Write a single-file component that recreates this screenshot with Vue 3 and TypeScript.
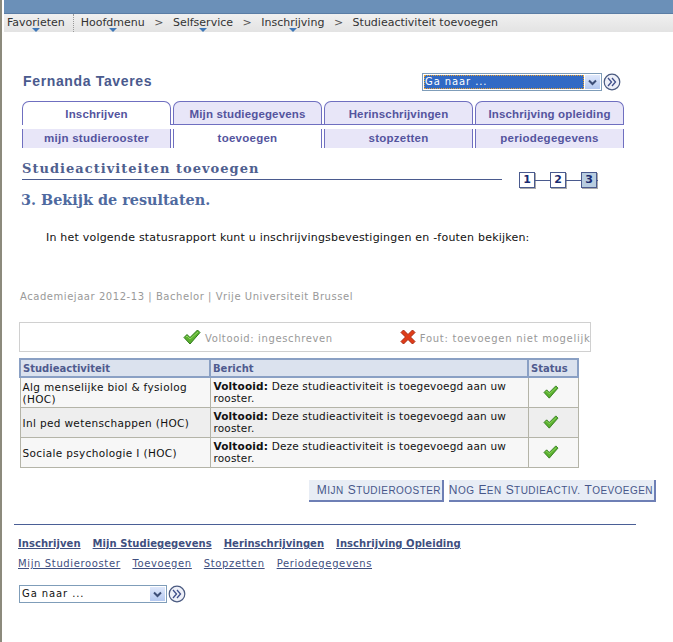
<template>
  <div class="page">
    <div class="topbar"></div>
    <nav class="crumbs">
      <span class="crumb fav">Favorieten<i class="drop"></i></span>
      <span class="crumb main">Hoofdmenu<i class="drop"></i></span>
      <span class="sep">&gt;</span>
      <span class="crumb">Selfservice<i class="drop"></i></span>
      <span class="sep">&gt;</span>
      <span class="crumb">Inschrijving<i class="drop"></i></span>
      <span class="sep">&gt;</span>
      <span class="crumb">Studieactiviteit toevoegen</span>
    </nav>

    <div class="head">
      <div class="name">Fernanda Taveres</div>
      <div class="goto">
        <div class="sel wide"><span class="sel-text active">Ga naar ...</span><span class="sel-btn"><svg width="9" height="7" viewBox="0 0 9 7"><path d="M1 1.5l3.5 3.5L8 1.5" fill="none" stroke="#3d4f78" stroke-width="2"/></svg></span></div>
        <svg class="go" width="18" height="18" viewBox="0 0 18 18"><circle cx="9" cy="9" r="7.8" fill="#eef0f8" stroke="#4a5a80" stroke-width="1.2"/><path d="M5 5l3.5 4L5 13M9 5l3.5 4L9 13" fill="none" stroke="#3f4f8a" stroke-width="1.3"/></svg>
      </div>
    </div>

    <div class="tabs">
      <div v-for="t in tabs" :key="t" class="tab" :class="{ on: t === 'Inschrijven' }">{{ t }}</div>
    </div>
    <div class="subtabs">
      <div v-for="t in subtabs" :key="t" class="subtab" :class="{ on: t === 'toevoegen' }">{{ t }}</div>
    </div>

    <div class="title-row">
      <div class="title">Studieactiviteiten toevoegen</div>
      <div class="steps">
        <span class="step">1</span><span class="link"></span>
        <span class="step">2</span><span class="link"></span>
        <span class="step cur">3</span><span class="tail"></span>
      </div>
    </div>
    <h2 class="sub">3. Bekijk de resultaten.</h2>
    <p class="intro">In het volgende statusrapport kunt u inschrijvingsbevestigingen en -fouten bekijken:</p>
    <p class="meta">Academiejaar 2012-13 | Bachelor | Vrije Universiteit Brussel</p>

    <div class="legend">
      <span class="leg ok"><svg width="18" height="16" viewBox="0 0 18 16"><path d="M1 8.5l3-3 3 3L14.5 1 17 3.5 7 15z" fill="#5cb030" stroke="#2f7a1c" stroke-width="1"/><path d="M3 8l1-1 3 3 8-7" fill="none" stroke="#8fd860" stroke-width="1"/></svg>Voltooid: ingeschreven</span>
      <span class="leg err"><svg width="16" height="16" viewBox="0 0 16 16"><path d="M1 3.5L3.5 1 8 5.5 12.5 1 15 3.5 10.5 8 15 12.5 12.5 15 8 10.5 3.5 15 1 12.5 5.5 8z" fill="#e03c18" stroke="#a82810" stroke-width="1"/></svg>Fout: toevoegen niet mogelijk</span>
    </div>

    <table class="grid">
      <thead>
        <tr><th class="c1">Studieactiviteit</th><th class="c2">Bericht</th><th class="c3">Status</th></tr>
      </thead>
      <tbody>
        <tr v-for="(r, i) in rows" :key="r" :class="{ alt: i === 1 }">
          <td class="act">{{ r }}</td>
          <td class="msg"><b>Voltooid:</b> Deze studieactiviteit is toegevoegd aan uw<br />rooster.</td>
          <td class="mid"><svg width="16" height="14" viewBox="0 0 18 16"><path d="M1 8.5l3-3 3 3L14.5 1 17 3.5 7 15z" fill="#5cb030" stroke="#2f7a1c" stroke-width="1"/><path d="M3 8l1-1 3 3 8-7" fill="none" stroke="#8fd860" stroke-width="1"/></svg></td>
        </tr>
      </tbody>
    </table>

    <div class="btns">
      <span class="btn b1"><span v-for="w in btn1" :key="w" class="word">{{ w }}</span></span>
      <span class="btn b2"><span v-for="w in btn2" :key="w" class="word">{{ w }}</span></span>
    </div>

    <hr class="rule" />

    <div class="links strong">
      <a v-for="t in footMain" :key="t">{{ t }}</a>
    </div>
    <div class="links">
      <a v-for="t in footSub" :key="t">{{ t }}</a>
    </div>

    <div class="goto foot">
      <div class="sel narrow"><span class="sel-text">Ga naar ...</span><span class="sel-btn"><svg width="9" height="7" viewBox="0 0 9 7"><path d="M1 1.5l3.5 3.5L8 1.5" fill="none" stroke="#3d4f78" stroke-width="2"/></svg></span></div>
      <svg class="go" width="18" height="18" viewBox="0 0 18 18"><circle cx="9" cy="9" r="7.8" fill="#eef0f8" stroke="#4a5a80" stroke-width="1.2"/><path d="M5 5l3.5 4L5 13M9 5l3.5 4L9 13" fill="none" stroke="#3f4f8a" stroke-width="1.3"/></svg>
    </div>
  </div>
</template>

<script setup lang="ts">
const tabs: string[] = ['Inschrijven', 'Mijn studiegegevens', 'Herinschrijvingen', 'Inschrijving opleiding'];
const subtabs: string[] = ['mijn studierooster', 'toevoegen', 'stopzetten', 'periodegegevens'];
const rows: string[] = ['Alg menselijke biol & fysiolog (HOC)', 'Inl ped wetenschappen (HOC)', 'Sociale psychologie I (HOC)'];
const btn1: string[] = ['Mijn', 'Studierooster'];
const btn2: string[] = ['Nog', 'een', 'Studieactiv.', 'Toevoegen'];
const footMain: string[] = ['Inschrijven', 'Mijn Studiegegevens', 'Herinschrijvingen', 'Inschrijving Opleiding'];
const footSub: string[] = ['Mijn Studierooster', 'Toevoegen', 'Stopzetten', 'Periodegegevens'];
</script>

<style>
html, body { background: #fff; overflow: hidden; }
</style>

<style scoped>
.page {
  position: relative;
  width: 673px;
  height: 642px;
  box-sizing: border-box;
  border-left: 2px solid #8c8a7c;
  font-family: "DejaVu Sans", Verdana, sans-serif;
  font-size: 10px;
  color: #111;
  overflow: hidden;
}
.topbar {
  height: 14px;
  background: #6b90b8;
  border-bottom: 1px solid #5a7da5;
  box-sizing: border-box;
  margin-left: 2px;
}
.crumbs {
  display: flex;
  height: 18px;
  margin-left: 2px;
  padding-left: 3px;
  background: linear-gradient(#f0f0f0, #e3e3e3);
  font-size: 11px;
  line-height: 17px;
  color: #333;
}
.crumb { position: relative; white-space: nowrap; }
.fav { padding-right: 8px; border-right: 1px dotted #999; margin-right: 7px; }
.sep { margin: 0 9.5px; color: #555; }
.drop {
  position: absolute;
  left: 50%;
  bottom: 0;
  margin-left: -4px;
  border: 4px solid transparent;
  border-top: 4px solid #3f78b8;
  border-bottom: 0;
}
.fav .drop { left: 29px; }
.head {
  display: flex;
  justify-content: space-between;
  align-items: center;
  height: 18px;
  margin: 41px 52px 0 21px;
}
.name {
  margin-bottom: 2px;
  font-family: "Liberation Sans", Arial, sans-serif;
  font-size: 14px;
  font-weight: bold;
  letter-spacing: 0.65px;
  color: #4a5a8e;
}
.goto { display: flex; align-items: center; gap: 1px; }
.sel {
  display: flex;
  align-items: center;
  height: 18px;
  box-sizing: border-box;
  border: 1px solid #7f9db9;
  background: #fff;
  padding: 1px;
  letter-spacing: 0.9px;
}
.wide { width: 180px; }
.narrow { width: 148px; }
.sel-text { flex: 1; padding-left: 1px; line-height: 14px; }
.sel-text.active { background: #316ac5; color: #fff; outline: 1px dotted #e8a030; outline-offset: -1px; }
.sel-btn {
  width: 15px;
  height: 14px;
  margin-left: 1px;
  display: flex;
  align-items: center;
  justify-content: center;
  background: linear-gradient(#dfe8fb, #b4c8f0);
}
.tabs, .subtabs {
  display: flex;
  gap: 2px;
  margin-left: 20px;
  width: 602px;
  font-family: "Liberation Sans", Arial, sans-serif;
  font-size: 11.5px;
  font-weight: bold;
  color: #54549e;
}
.tabs { margin-top: 10px; height: 23px; border-bottom: 1px solid #6f6fc0; letter-spacing: 0.15px; }
.tab {
  flex: 1;
  text-align: center;
  line-height: 24px;
  background: #e8e6f8;
  border: 1px solid #6f6fc0;
  border-bottom: 0;
  border-radius: 7px 7px 0 0;
  box-sizing: border-box;
}
.tab.on { background: #fff; margin-bottom: -1px; height: 24px; }
.subtabs { margin-top: 4px; height: 19px; letter-spacing: 0.25px; }
.subtab {
  flex: 1;
  text-align: center;
  line-height: 18px;
  background: #e8e6f8;
  border: 1px solid #6f6fc0;
  border-width: 0 1px;
  box-sizing: border-box;
}
.subtab.on { background: #fff; }
.title-row {
  display: flex;
  align-items: flex-end;
  margin: 11px 0 0 20px;
  height: 21px;
}
.title {
  width: 480px;
  box-sizing: border-box;
  height: 21px;
  padding-top: 2px;
  border-bottom: 1px solid #4a5a8e;
  font-family: "DejaVu Serif", Georgia, serif;
  font-size: 13px;
  font-weight: bold;
  letter-spacing: 1.03px;
  color: #4f608f;
}
.steps { display: flex; align-items: center; margin: 0 0 -8px 17px; }
.step {
  width: 16px;
  height: 16px;
  box-sizing: border-box;
  border: 1px solid #4a5a8e;
  box-shadow: 1px 1px 0 #aaa;
  background: #fff;
  text-align: center;
  font-size: 11px;
  font-weight: bold;
  line-height: 14px;
  color: #1a2a70;
}
.step.cur { background: #b8cde0; }
.link { width: 15px; height: 1px; background: #4a5a8e; }
.tail { width: 1px; height: 1px; background: #4a5a8e; }
.sub {
  margin: 10px 0 0 19px;
  font-family: "DejaVu Serif", Georgia, serif;
  font-size: 14.4px;
  font-weight: bold;
  line-height: 20px;
  color: #4f6a9f;
}
.intro { margin: 21px 0 0 44px; font-size: 11px; line-height: 14px; letter-spacing: 0.21px; }
.meta { margin: 45px 0 0 18px; line-height: 14px; color: #999; letter-spacing: 0.55px; }
.legend {
  position: relative;
  display: flex;
  align-items: center;
  margin: 18px 0 0 17px;
  width: 572px;
  height: 30px;
  box-sizing: border-box;
  border: 1px solid #d0d0d0;
  color: #999;
  white-space: nowrap;
}
.leg { display: flex; align-items: center; gap: 4px; padding-top: 2px; letter-spacing: 0.63px; }
.leg svg { margin-top: -2px; }
.ok { margin-left: 163px; }
.err { margin-left: 67px; letter-spacing: 0.73px; }
.grid {
  margin: 6px 0 0 17px;
  width: 560px;
  height: 110px;
  table-layout: fixed;
  border-collapse: collapse;
  border: 1px solid #c4cfe0;
}
th {
  box-sizing: border-box;
  height: 18px;
  padding: 0 2px;
  text-align: left;
  background: #dbe2ee;
  border: 2px solid #8aa0c4;
  color: #4f5b8e;
  font-weight: bold;
}
td {
  padding: 0 3px;
  font-size: 10.5px;
  line-height: 12px;
  background: #f7f7f7;
  border: 1px solid #b4b4a8;
  vertical-align: middle;
}
tr.alt td { background: #eeeeee; }
.act { padding: 0 2px; letter-spacing: 0.35px; }
.msg { vertical-align: top; padding-top: 2px; letter-spacing: 0.17px; }
.c1 { width: 190px; }
.c2 { width: 318px; }
.mid { text-align: center; padding-right: 7px; }
.btns { display: flex; gap: 5px; margin: 12px 0 0 307px; }
.btn {
  display: flex;
  justify-content: flex-end;
  align-items: baseline;
  gap: 4px;
  height: 22px;
  box-sizing: border-box;
  padding-right: 1px;
  line-height: 20px;
  background: #e8edf5;
  border-right: 2px solid #6e7fb5;
  border-bottom: 2px solid #6e7fb5;
  font-family: "Liberation Sans", Arial, sans-serif;
  font-size: 10px;
  letter-spacing: 0.45px;
  color: #47578a;
  white-space: nowrap;
}
.word { display: inline-block; text-transform: uppercase; }
.word::first-letter { font-size: 12px; }
.b1 { width: 135px; }
.b2 { width: 207px; }
.rule {
  margin: 22px 0 0 12px;
  width: 622px;
  height: 1px;
  border: 0;
  background: #4a5f96;
}
.links { display: flex; gap: 12px; margin: 12px 0 0 16px; line-height: 14px; letter-spacing: 0.63px; }
.links a { color: #3f4f80; text-decoration: underline; }
.links.strong { margin-top: 12px; font-weight: bold; letter-spacing: 0.05px; }
.links:not(.strong) { margin-top: 6px; }
.foot { margin: 14px 0 0 17px; }
</style>
